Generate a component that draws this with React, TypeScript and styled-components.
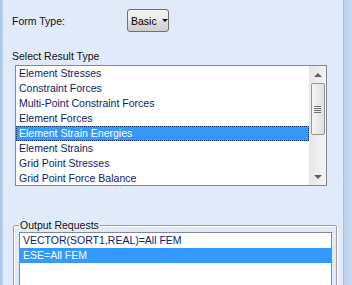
import React from 'react';
import styled, { createGlobalStyle } from 'styled-components';

const GlobalStyle = createGlobalStyle`
  html, body {
    margin: 0;
    padding: 0;
    background: #dfe9f9;
  }
  body {
    font-family: 'Liberation Sans', Arial, sans-serif;
    font-size: 10.5px;
  }
`;

const Window = styled.div`
  display: flex;
  width: 352px;
  height: 285px;
  overflow: hidden;
`;

const LeftEdge = styled.div`
  width: 3px;
  background: linear-gradient(to right, #a8c3e3, #bcd2ec);
`;

const RightEdge = styled.div`
  width: 8px;
  border-left: 1px solid #a9c1de;
  background: linear-gradient(to right, #bcd2ec, #c6d9ef);
`;

const Panel = styled.div`
  flex: 1;
  display: flex;
  flex-direction: column;
  background: #e0eafa;
  padding: 9px 0 0 9px;
  color: #111;
  overflow: hidden;
  & > * {
    flex-shrink: 0;
  }
`;

const FormRow = styled.div`
  display: flex;
  align-items: center;
  height: 23px;
`;

const Label = styled.span`
  width: 115px;
  line-height: 14px;
`;

const DropButton = styled.button`
  display: flex;
  align-items: center;
  gap: 5px;
  height: 23px;
  width: 42px;
  padding: 0 0 0 3px;
  border: 1px solid #707070;
  border-radius: 3px;
  background: linear-gradient(#f2f2f2 0%, #ebebeb 50%, #dddddd 51%, #cfcfcf 100%);
  font-family: inherit;
  font-size: 10.5px;
  color: #000;
`;

const Caret = styled.span`
  width: 0;
  height: 0;
  border-left: 3px solid transparent;
  border-right: 3px solid transparent;
  border-top: 3px solid #000;
`;

const SectionTitle = styled.div`
  margin-top: 17px;
  line-height: 14px;
`;

const ListBox = styled.div`
  display: flex;
  margin: 2px 0 0 3px;
  width: 312px;
  height: 121px;
  border: 1px solid #828790;
  background: #fff;
  box-sizing: border-box;
  overflow: hidden;
`;

const Items = styled.div`
  flex: 1;
  display: flex;
  flex-direction: column;
`;

const Item = styled.div<{ $selected?: boolean; $focus?: boolean }>`
  flex-shrink: 0;
  height: 15px;
  line-height: 13px;
  padding-left: 2px;
  color: ${(p) => (p.$selected ? '#fff' : '#0c2266')};
  background: ${(p) => (p.$selected ? '#3399ff' : 'transparent')};
  border: 1px dotted ${(p) => (p.$focus ? '#14336a' : 'transparent')};
  box-sizing: border-box;
  white-space: nowrap;
`;

const ScrollBar = styled.div`
  width: 17px;
  display: flex;
  flex-direction: column;
  align-items: center;
  background: linear-gradient(to right, #e6e6e6, #f4f4f4);
`;

const Arrow = styled.div<{ $down?: boolean }>`
  height: 17px;
  display: flex;
  align-items: center;
  justify-content: center;
  &::after {
    content: '';
    width: 0;
    height: 0;
    border-left: 4px solid transparent;
    border-right: 4px solid transparent;
    ${(p) => (p.$down ? 'border-top: 4px solid #606060;' : 'border-bottom: 4px solid #606060;')}
  }
`;

const Thumb = styled.div`
  width: 14px;
  height: 52px;
  border: 1px solid #979797;
  border-radius: 2px;
  box-sizing: border-box;
  background: linear-gradient(to right, #f5f5f5, #dedede);
  display: flex;
  flex-direction: column;
  align-items: center;
  justify-content: center;
  gap: 1px;
`;

const Grip = styled.div`
  width: 7px;
  height: 1px;
  background: #6f6f6f;
`;

const Track = styled.div`
  flex: 1;
`;

const Group = styled.fieldset`
  margin: 33px 6px 0 1px;
  padding: 0 0 0 5px;
  border: 1px solid #a0a0a0;
  box-shadow: inset 1px 1px 0 #fff, 1px 1px 0 #fff;
  border-radius: 2px;
  min-width: 0;
`;

const Legend = styled.legend`
  padding: 0 1px;
  margin-left: 0;
  line-height: 12px;
  color: #111;
`;

const RequestList = styled.div`
  margin-top: 1px;
  margin-right: 4px;
  height: 60px;
  border: 1px solid #828790;
  border-bottom: none;
  background: #fff;
  display: flex;
  flex-direction: column;
`;

const results = [
  'Element Stresses',
  'Constraint Forces',
  'Multi-Point Constraint Forces',
  'Element Forces',
  'Element Strain Energies',
  'Element Strains',
  'Grid Point Stresses',
  'Grid Point Force Balance',
];

const requests = ['VECTOR(SORT1,REAL)=All FEM', 'ESE=All FEM'];

export default function App() {
  return (
    <Window>
      <GlobalStyle />
      <LeftEdge />
      <Panel>
        <FormRow>
          <Label>Form Type:</Label>
          <DropButton>
            Basic
            <Caret />
          </DropButton>
        </FormRow>
        <SectionTitle>Select Result Type</SectionTitle>
        <ListBox>
          <Items>
            {results.map((r, i) => (
              <Item key={r} $selected={i === 4} $focus={i === 4}>
                {r}
              </Item>
            ))}
          </Items>
          <ScrollBar>
            <Arrow />
            <Thumb>
              <Grip />
              <Grip />
              <Grip />
              <Grip />
            </Thumb>
            <Track />
            <Arrow $down />
          </ScrollBar>
        </ListBox>
        <Group>
          <Legend>Output Requests</Legend>
          <RequestList>
            {requests.map((r, i) => (
              <Item key={r} $selected={i === 1}>
                {r}
              </Item>
            ))}
          </RequestList>
        </Group>
      </Panel>
      <RightEdge />
    </Window>
  );
}
